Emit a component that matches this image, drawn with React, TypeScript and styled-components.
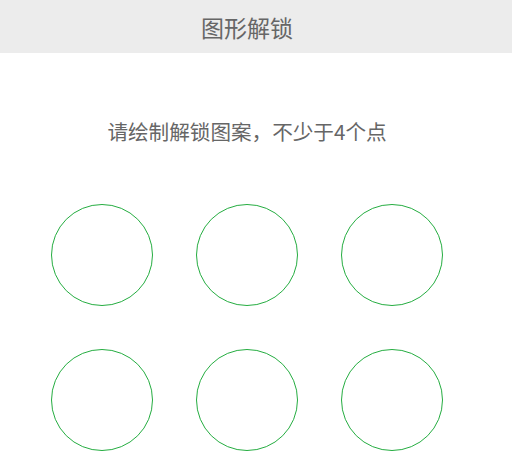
import React from "react";
import styled, { createGlobalStyle } from "styled-components";

const GlobalStyle = createGlobalStyle`
  html, body {
    margin: 0;
    padding: 0;
    background: #fff;
    font-family: "Noto Sans CJK SC", "Noto Sans", sans-serif;
    overflow: hidden;
  }
`;

const Page = styled.div`
  width: 512px;
  height: 462px;
  overflow: hidden;
`;

const Header = styled.header`
  height: 53px;
  background: #ececec;
  display: flex;
  align-items: center;
  justify-content: center;
  padding-right: 18px;
  font-size: 23px;
  color: #666;
`;

const Content = styled.main`
  width: 494px;
  display: flex;
  flex-direction: column;
  align-items: center;
`;

const Hint = styled.p`
  margin: 56px 0 0;
  line-height: 44px;
  font-size: 20.6px;
  color: #666;
`;

const Board = styled.div`
  margin-top: 51px;
  display: grid;
  grid-template-columns: repeat(3, 145px);
  grid-auto-rows: 145px;
  justify-items: center;
`;

const Dot = styled.div`
  width: 102px;
  height: 102px;
  box-sizing: border-box;
  border-radius: 50%;
  border: 1px solid #25ad41;
`;

export default function App() {
  const dots = Array.from({ length: 9 }, (_, i) => i);
  return (
    <Page>
      <GlobalStyle />
      <Header>图形解锁</Header>
      <Content>
        <Hint>请绘制解锁图案，不少于4个点</Hint>
        <Board>
          {dots.map((i) => (
            <Dot key={i} />
          ))}
        </Board>
      </Content>
    </Page>
  );
}
